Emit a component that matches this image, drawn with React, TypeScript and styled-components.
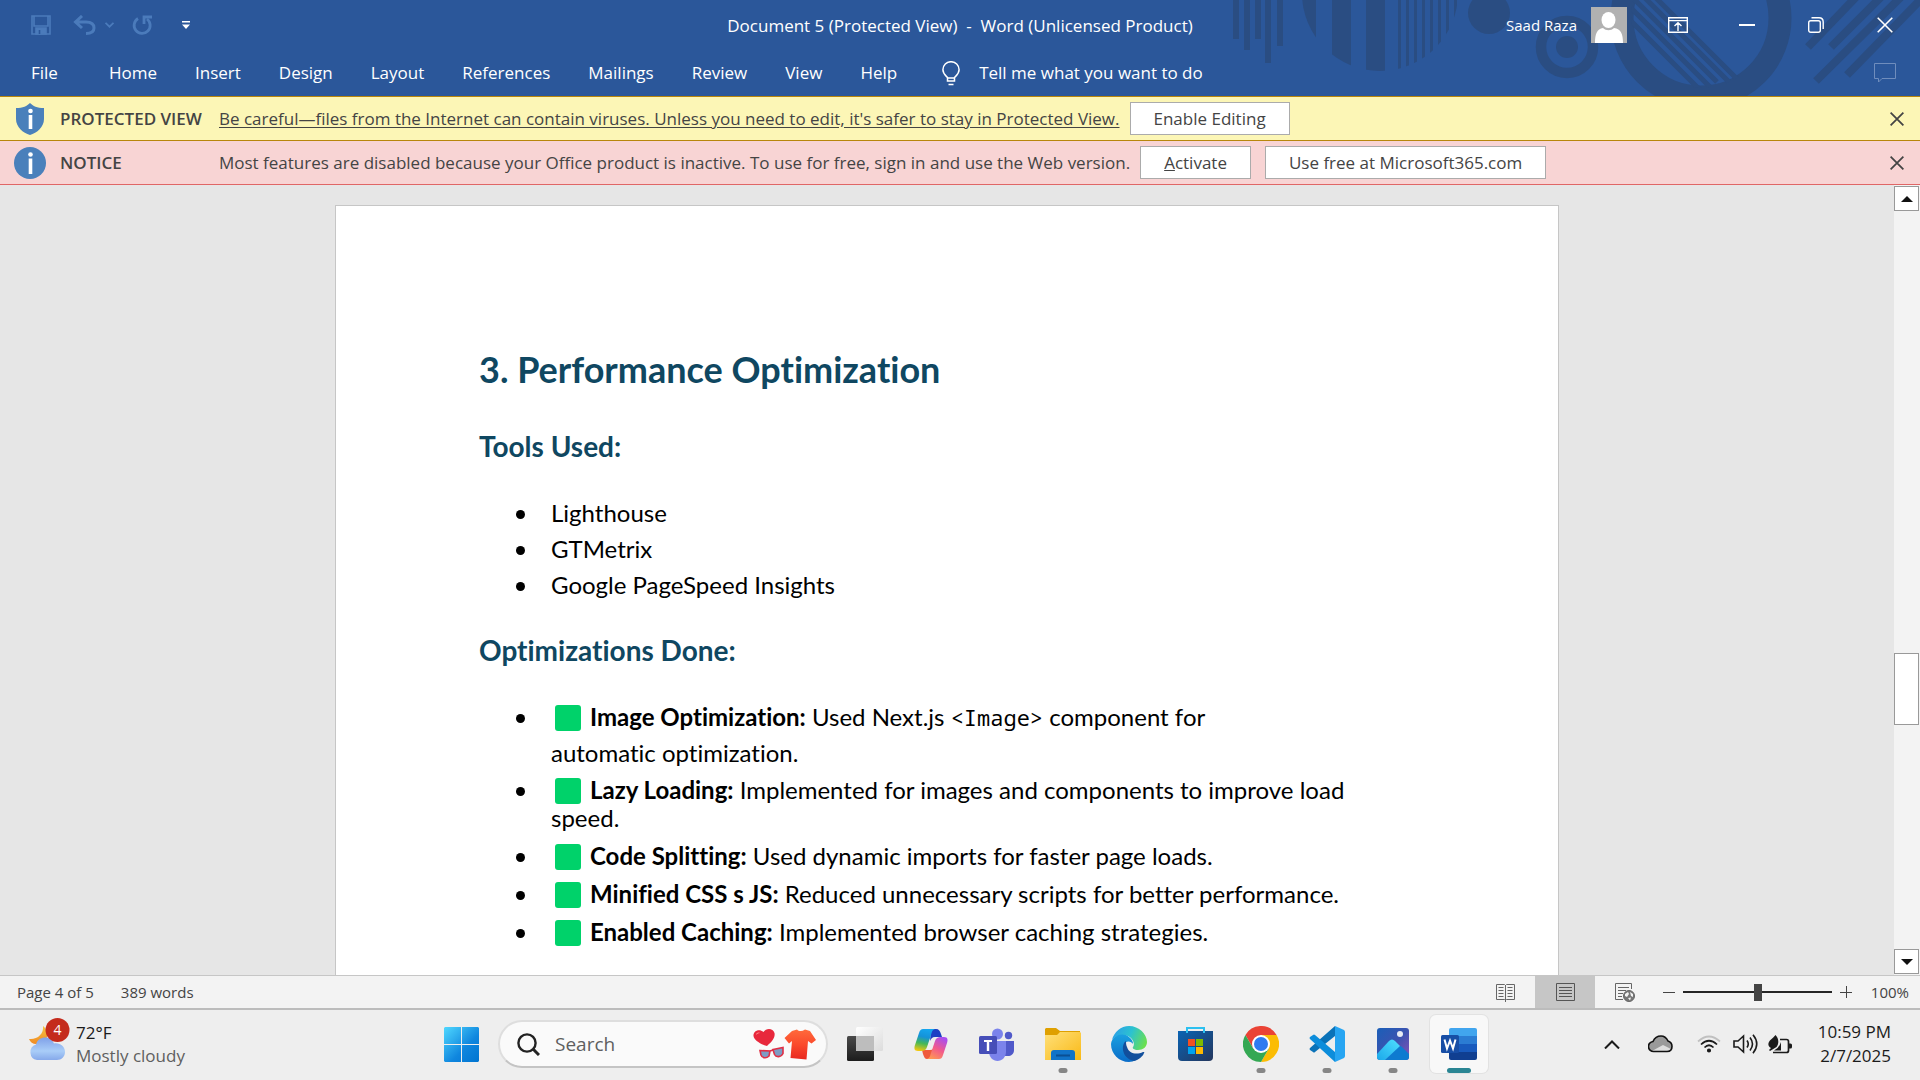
import React from "react";
import styled, { createGlobalStyle } from "styled-components";

const ui = `"Open Sans", "Noto Sans", sans-serif`;
const doc = `Lato, "Open Sans", sans-serif`;

const GlobalStyle = createGlobalStyle`
  *, *::before, *::after { box-sizing: border-box; }
  html, body { margin: 0; }
  body { font-family: ${ui}; overflow: hidden; }
  button, input { font-family: inherit; }
  button { margin: 0; padding: 0; border: 0; background: none; color: inherit; font-size: inherit; }
  svg { display: block; flex: none; }
`;

const Window = styled.div`
  display: flex;
  flex-direction: column;
  height: 100vh;
  background: #e6e6e6;
  white-space: nowrap;
`;

/* ---------- header ---------- */

const Header = styled.header`
  position: relative;
  flex: none;
  height: 96px;
  background: #2b579a;
  color: #fff;
  overflow: hidden;
`;

const Backdrop = styled.svg`
  position: absolute;
  top: 0;
  right: 0;
`;

const TitleBar = styled.div`
  position: relative;
  display: grid;
  grid-template-columns: 1fr auto 1fr;
  align-items: center;
  height: 50px;
`;

const QuickAccess = styled.div`
  display: flex;
  align-items: center;
  padding-left: 31px;
  color: #4b7bbb;
`;

const QuickButton = styled.button<{ $gap: number }>`
  margin-right: ${(p) => p.$gap}px;
`;

const Title = styled.div`
  padding-top: 2px;
  font-size: 17px;
  line-height: 24px;
  white-space: pre;
`;

const TitleRight = styled.div`
  display: flex;
  align-items: center;
  justify-content: flex-end;
  padding-right: 1px;
  font-size: 15px;
`;

const Avatar = styled.svg`
  margin-left: 14px;
  margin-right: 16px;
`;

const WindowButton = styled.button`
  display: grid;
  place-items: center;
  width: 69px;
  height: 46px;
`;

const WindowButtons = styled.div`
  display: flex;
`;

const Ribbon = styled.nav`
  position: relative;
  display: flex;
  align-items: center;
  height: 46px;
  padding: 0 24px 0 12px;
  font-size: 17px;
  line-height: 24px;
`;

const Tab = styled.button<{ $wide?: boolean }>`
  padding: 0 19px 2px;
  margin-right: ${(p) => (p.$wide ? 13 : 0)}px;
`;

const TellMe = styled.label`
  display: flex;
  align-items: center;
  gap: 19px;
  flex: 1;
  padding-left: 26px;
`;

const TellMeInput = styled.input`
  width: 260px;
  padding: 0;
  border: 0;
  outline: 0;
  background: none;
  color: #fff;
  font-size: 17px;
  line-height: 24px;
  &::placeholder { color: #fff; opacity: 1; }
`;

/* ---------- message bars ---------- */

const MessageBar = styled.section<{ $bg: string; $line: string }>`
  display: flex;
  align-items: center;
  flex: none;
  height: 44px;
  padding: 0 16px 0 14px;
  background: ${(p) => p.$bg};
  border-bottom: 1px solid ${(p) => p.$line};
  color: #444;
  font-size: 17px;
  line-height: 24px;
`;

const HeaderLine = styled.div`
  flex: none;
  height: 1px;
  background: #b8860b;
`;

const BarLabel = styled.strong`
  width: 159px;
  margin-left: 14px;
  font-weight: 600;
`;

const BarLink = styled.a`
  margin-right: 10px;
  color: inherit;
  text-underline-offset: 2px;
`;

const BarText = styled.span`
  margin-right: 10px;
`;

const BarButton = styled.button`
  height: 33px;
  padding: 0 23px;
  margin-right: 14px;
  border: 1px solid #ababab;
  background: #fff;
`;

const BarClose = styled.button`
  margin-left: auto;
`;

/* ---------- document ---------- */

const Workspace = styled.main`
  display: flex;
  flex: 1;
  min-height: 0;
`;

const Canvas = styled.div`
  display: flex;
  justify-content: center;
  flex: 1;
  padding-top: 20px;
  overflow: hidden;
`;

const Paper = styled.article`
  width: 1224px;
  height: 1584px;
  padding: 139px 143px;
  border: 1px solid #c6c6c6;
  background: #fff;
  color: #000;
  font-family: ${doc};
  font-variant-ligatures: none;
`;

const Heading = styled.h1`
  margin: 0;
  color: #0f4761;
  font-size: 36px;
  line-height: 48px;
`;

const SubHeading = styled.h2<{ $top: number }>`
  margin: ${(p) => p.$top}px 0 29px;
  color: #0f4761;
  font-size: 28px;
  line-height: 40px;
`;

const List = styled.ul`
  margin: 0;
  padding: 0;
  list-style: none;
  font-size: 24px;
`;

const Item = styled.li<{ $tight?: boolean }>`
  display: flex;
  padding: ${(p) => (p.$tight ? "5px 0" : "0")};
  line-height: ${(p) => (p.$tight ? 28 : 36)}px;

  &::before {
    content: "";
    flex: none;
    width: 9px;
    height: 9px;
    margin: ${(p) => (p.$tight ? 11 : 15)}px 26px 0 37px;
    border-radius: 50%;
    background: #000;
  }
`;

const Check = styled.span`
  display: inline-block;
  width: 26px;
  height: 26px;
  margin: 0 9px 0 4px;
  border-radius: 3px;
  background: #00d26a;
  vertical-align: -5px;
`;

const Code = styled.code`
  font-family: "Noto Sans Mono", "DejaVu Sans Mono", monospace;
  font-size: 22px;
  line-height: 1;
`;

const Scrollbar = styled.div`
  display: flex;
  flex-direction: column;
  flex: none;
  width: 26px;
  padding: 1px 1px 1px 0;
  background: #f3f3f3;
`;

const ScrollButton = styled.button`
  display: grid;
  place-items: center;
  height: 25px;
  border: 1px solid #999;
  background: #fff;
`;

const Track = styled.div`
  display: grid;
  grid-template-rows: 442fr 72px 224fr;
  flex: 1;
`;

const Thumb = styled.div`
  grid-row: 2;
  border: 1px solid #999;
  background: #fff;
`;

/* ---------- status bar ---------- */

const StatusBar = styled.footer`
  display: flex;
  align-items: center;
  flex: none;
  height: 35px;
  padding: 0 11px 0 17px;
  border-top: 1px solid #c6c6c6;
  border-bottom: 2px solid #bcbcbc;
  background: #f3f3f3;
  color: #444;
  font-size: 15px;
`;

const StatusText = styled.span`
  margin-right: 27px;
`;

const Views = styled.div`
  display: flex;
  height: 100%;
  margin-left: auto;
`;

const ViewButton = styled.button<{ $active?: boolean }>`
  display: grid;
  place-items: center;
  width: 60px;
  background: ${(p) => (p.$active ? "#c6c6c6" : "none")};
`;

const ZoomControls = styled.div`
  display: flex;
  align-items: center;
  gap: 8px;
  padding-left: 8px;
`;

const ZoomSlider = styled.input`
  appearance: none;
  width: 149px;
  height: 18px;
  margin: 0;
  background: linear-gradient(#262626, #262626) center / 100% 2px no-repeat;
  &::-webkit-slider-thumb {
    appearance: none;
    width: 8px;
    height: 17px;
    background: #444;
  }
`;

const ZoomValue = styled.span`
  width: 49px;
  text-align: right;
`;

/* ---------- taskbar ---------- */

const Taskbar = styled.footer`
  display: grid;
  grid-template-columns: 1fr auto 1fr;
  align-items: center;
  flex: none;
  height: 70px;
  padding: 0 29px 2px;
  background: #eee;
  color: #1b1b1b;
  font-size: 17px;
  line-height: 24px;
`;

const Weather = styled.button`
  display: flex;
  align-items: center;
  gap: 6px;
  justify-self: start;
  text-align: left;

  svg { margin-bottom: 8px; }
`;

const Muted = styled.div`
  color: #5f5f5f;
`;

const Apps = styled.div`
  display: flex;
  align-items: center;
  gap: 8px;
`;

const AppTile = styled.button<{ $state?: "open" | "active" }>`
  position: relative;
  display: grid;
  place-items: center;
  width: 58px;
  height: 58px;
  border-radius: 6px;
  background: ${(p) => (p.$state === "active" ? "#f8f8f8" : "none")};
  box-shadow: ${(p) => (p.$state === "active" ? "0 0 0 1px #e2e2e2" : "none")};

  &::after {
    content: "";
    position: absolute;
    bottom: 0;
    left: 50%;
    width: ${(p) => (p.$state === "active" ? 24 : 9)}px;
    height: 5px;
    border-radius: 3px;
    background: ${(p) => (p.$state === "active" ? "#2a8593" : "#868686")};
    transform: translateX(-50%);
    display: ${(p) => (p.$state ? "block" : "none")};
  }
`;

const SearchBox = styled.label`
  display: flex;
  align-items: center;
  width: 330px;
  height: 48px;
  padding: 0 10px 0 17px;
  border: 2px solid #dedede;
  border-bottom-color: #c4c4c4;
  border-radius: 24px;
  background: #fafafa;
`;

const SearchInput = styled.input`
  flex: 1;
  min-width: 0;
  padding: 0 0 0 15px;
  border: 0;
  outline: 0;
  background: none;
  font-size: 19px;
  &::placeholder { color: #5f5f5f; opacity: 1; }
`;

const Tray = styled.div`
  display: flex;
  align-items: center;
  justify-self: end;
`;

const TrayButton = styled.button<{ $after: number }>`
  margin-right: ${(p) => p.$after}px;
`;

const Clock = styled.time`
  text-align: right;
`;

/* ---------- drawings ---------- */

const Cross = ({ size, width = 2 }: { size: number; width?: number }) => (
  <svg width={size} height={size} viewBox="0 0 16 16" fill="none" stroke="currentColor" strokeWidth={width}>
    <path d="M.7.7l14.6 14.6M15.3.7L.7 15.3" />
  </svg>
);

const HeaderArt = () => (
  <Backdrop width="700" height="96" viewBox="1220 0 700 96" fill="#2a4d82" aria-hidden="true">
    <path d="M1233 0h6v39h-6zM1244 0h6v50h-6zM1255 0h6v39h-6zM1265 0h6v63h-6zM1277 0h6v46h-6z" />
    <clipPath id="disc"><circle cx="1380" cy="-7" r="78" /></clipPath>
    <path clipPath="url(#disc)" d="M1300 0h16v96h-16zM1332 0h19v96h-19zM1366 0h19v96h-19zM1398 0h3v96h-3zM1406 0h3v96h-3zM1414 0h3v96h-3zM1422 0h3v96h-3zM1430 0h3v96h-3zM1438 0h3v96h-3zM1446 0h3v96h-3zM1454 0h3v96h-3z" />
    <circle cx="1489" cy="13" r="21" />
    <circle cx="1567" cy="47" r="11" />
    <circle cx="1567" cy="47" r="26" fill="none" stroke="#2a4d82" strokeWidth="10.500" />
    <circle cx="1701" cy="18" r="79" fill="none" stroke="#2a4d82" strokeWidth="23" />
    <clipPath id="ring"><circle cx="1701" cy="18" r="70" /></clipPath>
    <g clipPath="url(#ring)" stroke="#2a4d82" strokeWidth="5">
      <path d="M1650-8l90 90M1639-8l90 90M1627-8l90 90M1615-8l95 95M1602-8l100 100" />
    </g>
    <g stroke="#2a4d82" strokeWidth="8">
      <path d="M1858-5l-50 52M1883-5l-52 52M1907-9l-91 90M1929-9l-82 84" />
    </g>
  </Backdrop>
);

const SaveIcon = () => (
  <svg width="20" height="20" viewBox="0 0 20 20" fill="none" stroke="currentColor" strokeWidth="1.600">
    <path d="M1 1h18v18H1zM3 1v10h14V1" />
    <path d="M5 13h10v6H5z" fill="currentColor" />
    <path d="M8.500 15v4" stroke="#2b579a" />
  </svg>
);
const UndoIcon = () => (
  <svg width="23" height="20" viewBox="0 0 23 20" fill="none" stroke="currentColor" strokeWidth="3">
    <path d="M2 7h11c5 0 8 2 8 6s-3 5.500-8 5.500M9 1L2.500 7 9 13" />
  </svg>
);
const Chevron = ({ up, w }: { up?: boolean; w: number }) => (
  <svg width={w} height={w / 2 + 1} viewBox="0 0 16 9" fill="none" stroke="currentColor" strokeWidth={up ? 2 : 3}>
    <path d={up ? "M1 8.500l7-7 7 7" : "M1 1l7 7 7-7"} />
  </svg>
);
const RedoIcon = () => (
  <svg width="20" height="20" viewBox="0 0 20 20" fill="none" stroke="currentColor" strokeWidth="2.800">
    <path d="M6 3.500A8 8 0 1 0 15 4" />
    <path d="M12 9V2h8" />
  </svg>
);
const CustomizeIcon = () => (
  <svg width="8" height="8" viewBox="0 0 8 8" fill="#fff">
    <path d="M0 0h8v1.500H0zM0 3.500h8L4 8z" />
  </svg>
);
const AvatarIcon = () => (
  <Avatar width="36" height="36" viewBox="0 0 36 36">
    <path fill="#b1b1b1" d="M0 0h36v36H0z" />
    <ellipse cx="17.500" cy="13" rx="7" ry="8" fill="#fff" />
    <path fill="#fff" d="M4 36c0-9 2-14 8-15 3 3 8 3 11 0 7 1 9 6 9 15z" />
  </Avatar>
);
const RibbonIcon = () => (
  <svg width="20" height="16" viewBox="0 0 20 16" fill="none" stroke="#fff" strokeWidth="1.400">
    <path d="M.7.7h18.600v14.600H.7zM.7 3.600h18.600M10 14V6M6.500 9L10 5.700 13.500 9" />
  </svg>
);
const RestoreIcon = () => (
  <svg width="16" height="16" viewBox="0 0 16 16" fill="none" stroke="#fff" strokeWidth="1.400">
    <rect x=".7" y="3.700" width="11.600" height="11.600" rx="2" />
    <path d="M3.500.8H11c3 0 4.200 1.400 4.200 4.200V12" />
  </svg>
);
const BulbIcon = () => (
  <svg width="18" height="25" viewBox="0 0 18 25" fill="none" stroke="#fff" strokeWidth="1.500">
    <path d="M5.500 20v-3.500C3 14 .9 12.500.9 8.800a8.100 8.100 0 0 1 16.200 0c0 3.700-2.100 5.200-4.600 7.700V20zM5.500 17h7M6.500 23.500h5" />
  </svg>
);
const CommentIcon = () => (
  <svg width="22" height="20" viewBox="0 0 22 20" fill="none" stroke="#6f8dbd" strokeWidth="1">
    <path d="M.5.500h21v15H8L4.500 19v-3.500h-4z" />
  </svg>
);
const ShieldIcon = () => (
  <svg width="32" height="32" viewBox="0 0 32 32">
    <path fill="#4a80bb" d="M16 0c3 3 7 5 14 5v11c0 8-7 14-14 16C9 30 2 24 2 16V5c7 0 11-2 14-5z" />
    <circle cx="16.500" cy="8" r="2.300" fill="#fff" />
    <path fill="#fff" d="M14.700 12h3.600v14h-3.600z" />
  </svg>
);
const InfoIcon = () => (
  <svg width="32" height="32" viewBox="0 0 32 32">
    <circle cx="16" cy="16" r="16" fill="#4a80bb" />
    <circle cx="16.500" cy="7.500" r="2.300" fill="#fff" />
    <path fill="#fff" d="M14.700 11.500h3.600V27h-3.600z" />
  </svg>
);
const Triangle = ({ down }: { down?: boolean }) => (
  <svg width="12" height="6" viewBox="0 0 12 6" fill="#111">
    <path d={down ? "M0 0h12L6 6z" : "M0 6h12L6 0z"} />
  </svg>
);
const ReadIcon = () => (
  <svg width="19" height="19" viewBox="0 0 19 19" fill="none" stroke="#666" strokeWidth="1">
    <path d="M.5 1.500h8l1 1 1-1h8v15h-8l-1 1-1-1h-8zM9.500 2v17" />
    <path d="M2.500 4.500h5M2.500 7.500h5M2.500 10.500h5M2.500 13.500h5M11.500 4.500h5M11.500 7.500h5M11.500 10.500h5M11.500 13.500h5" />
  </svg>
);
const PrintIcon = () => (
  <svg width="19" height="19" viewBox="0 0 19 19" fill="none" stroke="#555" strokeWidth="1">
    <path d="M.5.500h18v17H.5zM3 4.500h13M3 7.500h13M3 10.500h13M3 13.500h13" />
  </svg>
);
const WebIcon = () => (
  <svg width="20" height="19" viewBox="0 0 20 19" fill="none" stroke="#666" strokeWidth="1">
    <path d="M8 16.500H.5V.500h16V6M3 4.500h11M3 7.500h8M3 10.500h5M3 13.500h4" />
    <circle cx="14" cy="13" r="5.500" fill="#777" />
    <path fill="#f3f3f3" stroke="none" d="M10 11l3-2 1 2-2 3-2-1zM15 9l3 2v3l-2-1zM13 15l3-.5-1 3z" />
  </svg>
);
const Sign = ({ plus }: { plus?: boolean }) => (
  <svg width="12" height="12" viewBox="0 0 12 12" stroke="#444" strokeWidth="1">
    <path d={plus ? "M0 6.500h12M6.500 0v12" : "M0 6.500h12"} />
  </svg>
);

const WeatherIcon = () => (
  <svg width="41" height="46" viewBox="0 0 41 46">
    <defs>
      <linearGradient id="moon" x1="0" y1="0" x2="0" y2="1"><stop stopColor="#f5c542" /><stop offset="1" stopColor="#f08a24" /></linearGradient>
      <linearGradient id="cloud" x1="0" y1="0" x2="0" y2="1"><stop stopColor="#7fa0e8" /><stop offset=".6" stopColor="#a9cdf8" /><stop offset="1" stopColor="#86a9ea" /></linearGradient>
    </defs>
    <path fill="url(#moon)" d="M14 9c7 5 6 19-7 18-3 0-6-2-7-5 8 1 15-5 14-13z" />
    <path fill="url(#cloud)" d="M8 43a8 8 0 0 1-1-15.500C8 23 12 20.500 16.500 20.500c4 0 7 2.500 8.500 6 6-1 11 3 11 8.500 0 4.500-3.500 8-8 8z" />
    <circle cx="28.500" cy="13" r="12" fill="#c42b1c" />
    <text x="28.500" y="18" textAnchor="middle" fontSize="14" fill="#fff" fontFamily="Open Sans">4</text>
  </svg>
);
const StartIcon = () => (
  <svg width="35" height="35" viewBox="0 0 35 35">
    <linearGradient id="win" x1="0" y1="0" x2="35" y2="35" gradientUnits="userSpaceOnUse"><stop stopColor="#50d8ff" /><stop offset=".6" stopColor="#0f86de" /><stop offset="1" stopColor="#0074d0" /></linearGradient>
    <path fill="url(#win)" d="M1 0h16v17H0V1zM18 0h16l1 1v16H18zM0 18h17v17H1l-1-1zM18 18h17v16l-1 1H18z" />
  </svg>
);
const SearchIcon = () => (
  <svg width="23" height="23" viewBox="0 0 23 23" fill="none" stroke="#222" strokeWidth="2.400">
    <circle cx="10" cy="10" r="8.600" />
    <path d="M16 16l6 6" strokeWidth="3" />
  </svg>
);
const ValentineIcon = () => (
  <svg width="63" height="31" viewBox="0 0 63 31">
    <linearGradient id="shirt" x1="0" y1="0" x2="0" y2="1"><stop stopColor="#ff6a3c" /><stop offset=".5" stopColor="#fb4a2c" /><stop offset="1" stopColor="#e8281f" /></linearGradient>
    <path fill="#e8283c" d="M14 17C7 15 1 11 .5 7 0 2 6-1 10.500 3 13-1 20-1 21.500 4c1 5-3 9-7.500 13z" />
    <path fill="#ff8d8d" d="M3 6c0-2 2-3 4-2-2 0-3 1-4 2z" />
    <path fill="#7d9cc4" stroke="#e02f45" strokeWidth="1.600" d="M7 21.500l10 .5-1 5c-3 3-7 2-8-1zM20 20.500L30 18.500l0 6c-2 4-7 4-8.500 1zM17 22l3-1" />
    <path fill="url(#shirt)" d="M39 2l5-1.500c2 2 5 2 8 0L57 2l6 9-4.500 3.500L55 12l-1.500 18.500L37.500 29 39 12l-3 2.500L31.500 9z" />
  </svg>
);
const TaskViewIcon = () => (
  <svg width="36" height="36" viewBox="0 0 36 36">
    <linearGradient id="tv" x1="0" y1="0" x2="0" y2="1"><stop stopColor="#4a4a4a" /><stop offset="1" stopColor="#1c1c1c" /></linearGradient>
    <linearGradient id="tv2" x1="0" y1="0" x2="1" y2="1"><stop stopColor="#fff" /><stop offset="1" stopColor="#dcdcdc" /></linearGradient>
    <rect y="10" width="27" height="25" rx="1.500" fill="url(#tv)" />
    <rect x="9" y="1" width="27" height="24" rx="1.500" fill="url(#tv2)" />
    <path fill="#bdbdbd" d="M9 10h18v15H9z" />
  </svg>
);
const CopilotIcon = () => (
  <svg width="34" height="32" viewBox="0 0 34 32">
    <defs>
      <linearGradient id="cpA" x1=".5" y1="0" x2=".3" y2="1"><stop stopColor="#15a5ee" /><stop offset=".35" stopColor="#1592d8" /><stop offset=".65" stopColor="#45b858" /><stop offset="1" stopColor="#f2c80f" /></linearGradient>
      <linearGradient id="cpB" x1=".7" y1="0" x2=".2" y2="1"><stop stopColor="#a84df0" /><stop offset=".5" stopColor="#f1598c" /><stop offset="1" stopColor="#ff9a52" /></linearGradient>
    </defs>
    <path fill="#1d3fc4" d="M17 1h5c3 0 4 2 5 5l1 3h-7c-3 0-4 2-5 4z" />
    <path fill="#ef5a3c" d="M8 22h8c3 0 4-2 5-4l-4 13h-4c-2 0-3-2-4-5z" />
    <path fill="url(#cpA)" d="M9 1h12c-3 1-3 3-4 6l-4 12c-1 3-3 4-6 4H4c-4 0-4-3-3-6L5 5c1-3 2-4 4-4z" />
    <path fill="url(#cpB)" d="M25 31H13c3-1 3-3 4-6l4-12c1-3 3-4 6-4h3c4 0 4 3 3 6l-4 12c-1 3-2 4-4 4z" />
  </svg>
);
const TeamsIcon = () => (
  <svg width="36" height="33" viewBox="0 0 36 33">
    <circle cx="29.500" cy="7.500" r="3.700" fill="#5059c9" />
    <path fill="#5059c9" d="M25 13h10v9c0 4-3 6-6 6h-4z" />
    <circle cx="18.500" cy="6" r="5.500" fill="#7b83eb" />
    <path fill="#7b83eb" d="M10 13h17v11c0 5-4 9-8.500 9S10 29 10 24z" />
    <rect y="8" width="18" height="18" rx="1.500" fill="#464eb8" />
    <path fill="#fff" d="M5 12h8v2h-2.800v9H7.800v-9H5z" />
  </svg>
);
const ExplorerIcon = () => (
  <svg width="36" height="33" viewBox="0 0 36 33">
    <linearGradient id="fold" x1="0" y1="0" x2="1" y2="1"><stop stopColor="#ffe07a" /><stop offset="1" stopColor="#f9b916" /></linearGradient>
    <path fill="#dfa000" d="M1 0h10l4 3h20v7H0V1z" />
    <path fill="url(#fold)" d="M0 7h12l3-3h20l1 1v27H0z" />
    <path fill="#1173c8" d="M6 32v-7q0-3 3-3h18q3 0 3 3v7z" />
    <path stroke="#0b4f93" strokeWidth="2" d="M11 27.500h14" />
  </svg>
);
const EdgeIcon = () => (
  <svg width="36" height="36" viewBox="0 0 36 36">
    <defs>
      <linearGradient id="edA" x1="0" y1=".3" x2="1" y2=".6"><stop stopColor="#2a9fe8" /><stop offset=".5" stopColor="#2cc2d0" /><stop offset="1" stopColor="#6be04e" /></linearGradient>
      <linearGradient id="edB" x1="0" y1="0" x2="0" y2="1"><stop stopColor="#1aa0e0" /><stop offset="1" stopColor="#0a6cc8" /></linearGradient>
    </defs>
    <path fill="url(#edA)" d="M1 14C3 6 10 0 18 0c10 0 18 8 18 16 0 5-4 8-9 8-4 0-6-2-5-3 2-2 1-8-5-11C11 8 5 9 1 14z" />
    <path fill="url(#edB)" d="M0 18C1 9 12 6 18 11c3 2 4 5 4 7-2-3-8-4-9 2-1 7 5 13 12 14-2 1-5 2-7 2C8 36 0 28 0 18z" />
    <path fill="#124f9c" d="M15 15c-5 3-5 17 8 20 5-1 9-5 10-8 1-1 0-1-1-1-6 3-14 2-16-5-1-2-1-4-1-6z" />
  </svg>
);
const StoreIcon = () => (
  <svg width="35" height="36" viewBox="0 0 35 36">
    <linearGradient id="store" x1="0" y1="0" x2="1" y2="1"><stop stopColor="#0a64b4" /><stop offset="1" stopColor="#24365c" /></linearGradient>
    <path fill="url(#store)" d="M0 5h35v26q0 4-4 4H4q-4 0-4-4z" />
    <path fill="none" stroke="#2cc0f0" strokeWidth="2" d="M9 7V2h17v5" />
    <path fill="#f25022" d="M10 13h7v7h-7z" /><path fill="#7fba00" d="M18 13h7v7h-7z" />
    <path fill="#00a4ef" d="M10 21h7v7h-7z" /><path fill="#ffb900" d="M18 21h7v7h-7z" />
  </svg>
);
const ChromeIcon = () => (
  <svg width="36" height="36" viewBox="0 0 36 36">
    <path fill="#ea4335" d="M2.400 9A18 18 0 0 1 33.600 9H18l-7.800 13.500z" />
    <path fill="#fbbc04" d="M33.600 9A18 18 0 0 1 18 36l7.800-13.500L18 9z" />
    <path fill="#34a853" d="M18 36A18 18 0 0 1 2.400 9l7.800 13.500h15.600z" />
    <circle cx="18" cy="18" r="9" fill="#fff" />
    <circle cx="18" cy="18" r="7" fill="#2f7bf0" />
  </svg>
);
const CodeIcon = () => (
  <svg width="36" height="36" viewBox="0 0 36 36">
    <path fill="#0a72b8" d="M26 0v10L6 26q-1 1-2 0l-3-2q-1-1 0-2z" />
    <path fill="#0d8ddb" d="M26 36V26L6 9Q5 8 4 9l-3 2q-1 1 0 2z" />
    <path fill="#27a5f2" d="M26 0l9 4q1 1 1 2v24q0 1-1 2l-9 4z" />
  </svg>
);
const PhotosIcon = () => (
  <svg width="32" height="32" viewBox="0 0 32 32">
    <defs>
      <linearGradient id="phA" x1="0" y1="0" x2="1" y2="1"><stop stopColor="#1a5fb8" /><stop offset=".5" stopColor="#3b53b0" /><stop offset="1" stopColor="#8a52b8" /></linearGradient>
      <linearGradient id="phB" x1="1" y1="0" x2="0" y2="1"><stop stopColor="#4fe0ff" /><stop offset="1" stopColor="#1ba8ea" /></linearGradient>
      <clipPath id="ph"><rect width="32" height="32" rx="3" /></clipPath>
    </defs>
    <g clipPath="url(#ph)">
      <path fill="url(#phA)" d="M0 0h32v32H0z" />
      <path fill="#0e7bd0" d="M8 32l13-13q2-2 4 0l9 9v4z" />
      <path fill="url(#phB)" d="M0 26l12-13q3-3 6 0l5 5-15 14H0z" />
      <circle cx="23" cy="6" r="3" fill="#e8ecf4" />
    </g>
  </svg>
);
const WordIcon = () => (
  <svg width="36" height="33" viewBox="0 0 36 33">
    <path fill="#41a5ee" d="M10 0h24q2 0 2 2v7H8V2q0-2 2-2z" />
    <path fill="#2b7cd3" d="M8 8h28v8H8z" /><path fill="#185abd" d="M8 16h28v8H8z" />
    <path fill="#103f91" d="M8 24h28v6q0 2-2 2H10q-2 0-2-2z" />
    <rect y="7" width="18" height="18" rx="1.500" fill="#174ea6" />
    <path fill="none" stroke="#fff" strokeWidth="2" d="M3.500 11.500l2.500 9 3-8 3 8 2.500-9" />
  </svg>
);
const CloudIcon = () => (
  <svg width="25" height="18" viewBox="0 0 25 18">
    <path fill="#9a9a9a" d="M6 16.500A5 5 0 0 1 5 6.500C7 2 10 1 13 1c4 0 6 3 7 5 3 1 4 3 4 5.500 0 3-2 5-5 5z" />
    <path fill="#ddd" d="M4 16l11-6 8 4-4 2.500H6z" />
    <path fill="none" stroke="#111" strokeWidth="1.600" d="M6 16.500A5 5 0 0 1 5 6.500C7 2 10 1 13 1c4 0 6 3 7 5 3 1 4 3 4 5.500 0 3-2 5-5 5z" />
  </svg>
);
const WifiIcon = () => (
  <svg width="24" height="18" viewBox="0 0 24 18" fill="none" stroke="#1b1b1b" strokeWidth="1.700">
    <path stroke="#c0c0c0" d="M1 6.500q11-10 22 0" />
    <path d="M4 9.500q8-7.500 16 0M7.500 12.500q4.500-4.500 9 0" />
    <circle cx="12" cy="15.500" r="1.600" fill="#1b1b1b" stroke="none" />
    <circle cx="12" cy="15.500" r="1.200" />
  </svg>
);
const VolumeIcon = () => (
  <svg width="25" height="20" viewBox="0 0 25 20" fill="none" stroke="#1b1b1b" strokeWidth="1.600">
    <path d="M1 7h4l5.500-5v16L5 13H1zM14 6.500q2.500 3.500 0 7M17 3.500q5 6.500 0 13M20 .8q7.500 9.200 0 18.400" />
  </svg>
);
const BatteryIcon = () => (
  <svg width="24" height="19" viewBox="0 0 24 19" fill="none" stroke="#1b1b1b" strokeWidth="1.700">
    <path d="M12 4.500h6.500q2 0 2 2v9q0 2-2 2H5" />
    <path fill="#1b1b1b" stroke="none" d="M21 8.500h1.500q1.500 0 1.500 1.500v2q0 1.500-1.500 1.500H21zM7.500 0c3 3 4 8 1 12L2 16l-1-1 2-2C-1 11 0 7 3 4.500 4.500 3 6 2 7.500 0zM6 15.500q5-2 7-8.500v8.500z" />
  </svg>
);

/* ---------- content ---------- */

const tabs = ["File", "Home", "Insert", "Design", "Layout", "References", "Mailings", "Review", "View", "Help"];
const tools = ["Lighthouse", "GTMetrix", "Google PageSpeed Insights"];

const apps: { name: string; icon: React.ReactNode; state?: "open" | "active" }[] = [
  { name: "Task view", icon: <TaskViewIcon /> },
  { name: "Copilot", icon: <CopilotIcon /> },
  { name: "Teams", icon: <TeamsIcon /> },
  { name: "File Explorer", icon: <ExplorerIcon />, state: "open" },
  { name: "Edge", icon: <EdgeIcon /> },
  { name: "Microsoft Store", icon: <StoreIcon /> },
  { name: "Chrome", icon: <ChromeIcon />, state: "open" },
  { name: "Visual Studio Code", icon: <CodeIcon />, state: "open" },
  { name: "Photos", icon: <PhotosIcon />, state: "open" },
  { name: "Word", icon: <WordIcon />, state: "active" },
];

export default function App() {
  return (
    <Window>
      <GlobalStyle />
      <Header>
        <HeaderArt />
        <TitleBar>
          <QuickAccess>
            <QuickButton $gap={22} aria-label="Save"><SaveIcon /></QuickButton>
            <QuickButton $gap={9} aria-label="Undo"><UndoIcon /></QuickButton>
            <QuickButton $gap={18} aria-label="Undo list"><Chevron w={9} /></QuickButton>
            <QuickButton $gap={30} aria-label="Redo"><RedoIcon /></QuickButton>
            <QuickButton $gap={0} aria-label="Customize toolbar"><CustomizeIcon /></QuickButton>
          </QuickAccess>
          <Title>{"Document 5 (Protected View)  -  Word (Unlicensed Product)"}</Title>
          <TitleRight>
            <span>Saad Raza</span>
            <AvatarIcon />
            <WindowButtons>
              <WindowButton aria-label="Ribbon display options"><RibbonIcon /></WindowButton>
              <WindowButton aria-label="Minimize">
                <svg width="16" height="2" viewBox="0 0 16 2"><path fill="#fff" d="M0 0h16v2H0z" /></svg>
              </WindowButton>
              <WindowButton aria-label="Restore"><RestoreIcon /></WindowButton>
              <WindowButton aria-label="Close"><Cross size={16} width={1.6} /></WindowButton>
            </WindowButtons>
          </TitleRight>
        </TitleBar>
        <Ribbon>
          {tabs.map((t) => <Tab key={t} $wide={t === "File"}>{t}</Tab>)}
          <TellMe>
            <BulbIcon />
            <TellMeInput aria-label="Tell me" placeholder="Tell me what you want to do" />
          </TellMe>
          <button aria-label="Comments"><CommentIcon /></button>
        </Ribbon>
      </Header>
      <HeaderLine />

      <MessageBar $bg="#fcf6b6" $line="#b8860b">
        <ShieldIcon />
        <BarLabel>PROTECTED VIEW</BarLabel>
        <BarLink href="#">Be careful—files from the Internet can contain viruses. Unless you need to edit, it's safer to stay in Protected View.</BarLink>
        <BarButton>Enable Editing</BarButton>
        <BarClose aria-label="Close message"><Cross size={14} /></BarClose>
      </MessageBar>
      <MessageBar $bg="#f8d4d4" $line="#e06666">
        <InfoIcon />
        <BarLabel>NOTICE</BarLabel>
        <BarText>Most features are disabled because your Office product is inactive. To use for free, sign in and use the Web version.</BarText>
        <BarButton><u>A</u>ctivate</BarButton>
        <BarButton>Use free at Microsoft365.com</BarButton>
        <BarClose aria-label="Close notice"><Cross size={14} /></BarClose>
      </MessageBar>

      <Workspace>
        <Canvas>
          <Paper>
            <Heading>3. Performance Optimization</Heading>
            <SubHeading $top={33}>Tools Used:</SubHeading>
            <List>
              {tools.map((t) => <Item key={t}>{t}</Item>)}
            </List>
            <SubHeading $top={27}>Optimizations Done:</SubHeading>
            <List>
              <Item>
                <div><Check /><b>Image Optimization:</b> Used Next.js <Code>&lt;Image&gt;</Code> component for<br />automatic optimization.</div>
              </Item>
              <Item $tight>
                <div><Check /><b>Lazy Loading:</b> Implemented for images and components to improve load<br />speed.</div>
              </Item>
              <Item $tight>
                <div><Check /><b>Code Splitting:</b> Used dynamic imports for faster page loads.</div>
              </Item>
              <Item $tight>
                <div><Check /><b>Minified CSS s JS:</b> Reduced unnecessary scripts for better performance.</div>
              </Item>
              <Item $tight>
                <div><Check /><b>Enabled Caching:</b> Implemented browser caching strategies.</div>
              </Item>
            </List>
          </Paper>
        </Canvas>
        <Scrollbar>
          <ScrollButton aria-label="Scroll up"><Triangle /></ScrollButton>
          <Track><Thumb /></Track>
          <ScrollButton aria-label="Scroll down"><Triangle down /></ScrollButton>
        </Scrollbar>
      </Workspace>

      <StatusBar>
        <StatusText>Page 4 of 5</StatusText>
        <StatusText>389 words</StatusText>
        <Views>
          <ViewButton aria-label="Read mode"><ReadIcon /></ViewButton>
          <ViewButton $active aria-label="Print layout"><PrintIcon /></ViewButton>
          <ViewButton aria-label="Web layout"><WebIcon /></ViewButton>
        </Views>
        <ZoomControls>
          <button aria-label="Zoom out"><Sign /></button>
          <ZoomSlider type="range" aria-label="Zoom" min={0} max={200} defaultValue={100} />
          <button aria-label="Zoom in"><Sign plus /></button>
          <ZoomValue>100%</ZoomValue>
        </ZoomControls>
      </StatusBar>

      <Taskbar>
        <Weather>
          <WeatherIcon />
          <div>
            <div>72°F</div>
            <Muted>Mostly cloudy</Muted>
          </div>
        </Weather>
        <Apps>
          <AppTile aria-label="Start"><StartIcon /></AppTile>
          <SearchBox>
            <SearchIcon />
            <SearchInput aria-label="Search" placeholder="Search" />
            <ValentineIcon />
          </SearchBox>
          {apps.map((a) => (
            <AppTile key={a.name} $state={a.state} aria-label={a.name}>{a.icon}</AppTile>
          ))}
        </Apps>
        <Tray>
          <TrayButton $after={28} aria-label="Hidden icons"><Chevron up w={16} /></TrayButton>
          <TrayButton $after={24} aria-label="OneDrive"><CloudIcon /></TrayButton>
          <TrayButton $after={12} aria-label="Network"><WifiIcon /></TrayButton>
          <TrayButton $after={10} aria-label="Volume"><VolumeIcon /></TrayButton>
          <TrayButton $after={26} aria-label="Battery"><BatteryIcon /></TrayButton>
          <Clock>10:59 PM<br />2/7/2025</Clock>
        </Tray>
      </Taskbar>
    </Window>
  );
}
